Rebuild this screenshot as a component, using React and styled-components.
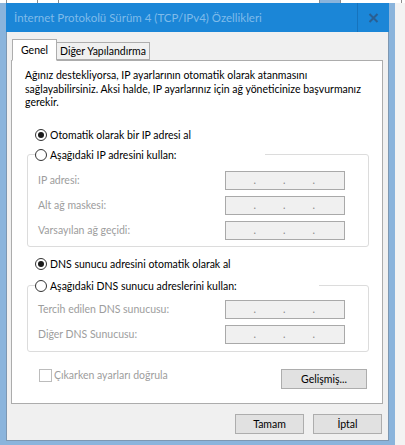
import styled, { createGlobalStyle } from 'styled-components';

const FONT = `Lato, "Noto Sans", "Liberation Sans", sans-serif`;

const GlobalStyle = createGlobalStyle`
  html, body {
    margin: 0;
    padding: 0;
    background: #f3f3f3;
  }
  body {
    font-family: ${FONT};
    font-size: 10.5px;
    color: #000;
  }
`;

const App = () => {
  return (
    <Page>
      <GlobalStyle />
      <BackWindow>
        <BackCell $w={6} />
        <BackCell $w={30} />
        <BackCell $w={20} />
        <BackCell $w={260} />
        <BackCell $w={20} $blue />
        <BackCell $w={60} />
      </BackWindow>
      <Desk>
        <Edge />
        <Window>
          <TitleBar>
            <Title>İnternet Protokolü Sürüm 4 (TCP/IPv4) Özellikleri</Title>
            <CloseButton>
              <svg width="11" height="10" viewBox="0 0 11 10">
                <path d="M1.5 1 L9.5 9 M9.5 1 L1.5 9" stroke="#2a5f92" strokeWidth="2" />
              </svg>
            </CloseButton>
          </TitleBar>
          <Body>
            <Tabs>
              <Tab $active>Genel</Tab>
              <Tab>Diğer Yapılandırma</Tab>
            </Tabs>
            <Panel>
              <Intro>
                Ağınız destekliyorsa, IP ayarlarının otomatik olarak atanmasını
                <br />
                sağlayabilirsiniz. Aksi halde, IP ayarlarınız için ağ yöneticinize başvurmanız
                <br />
                gerekir.
              </Intro>

              <RadioRow $top={17}>
                <Radio $checked />
                <span>Otomatik olarak bir IP adresi al</span>
              </RadioRow>
              <Group $top={4}>
                <Legend $width={230}>
                  <Radio />
                  <span>Aşağıdaki IP adresini kullan:</span>
                </Legend>
                <Fields $padTop={8} $padBottom={6}>
                  <Field label="IP adresi:" />
                  <Field label="Alt ağ maskesi:" />
                  <Field label="Varsayılan ağ geçidi:" />
                </Fields>
              </Group>

              <RadioRow $top={9}>
                <Radio $checked />
                <span>DNS sunucu adresini otomatik olarak al</span>
              </RadioRow>
              <Group $top={6}>
                <Legend $width={284}>
                  <Radio />
                  <span>Aşağıdaki DNS sunucu adreslerini kullan:</span>
                </Legend>
                <Fields $padTop={6} $padBottom={7}>
                  <Field label="Tercih edilen DNS sunucusu:" />
                  <Field label="Diğer DNS Sunucusu:" />
                </Fields>
              </Group>

              <BottomRow>
                <CheckLabel>
                  <CheckBox />
                  <span>Çıkarken ayarları doğrula</span>
                </CheckLabel>
                <Button $width={86}>Gelişmiş...</Button>
              </BottomRow>
            </Panel>
            <Footer>
              <Button $width={69}>Tamam</Button>
              <Button $width={69}>İptal</Button>
            </Footer>
          </Body>
        </Window>
        <Edge />
        <Beyond />
      </Desk>
    </Page>
  );
};

const Field = ({ label }) => (
  <FieldRow>
    <FieldLabel>{label}</FieldLabel>
    <IpBox>
      <IpPart />
      <IpPart>.</IpPart>
      <IpPart>.</IpPart>
      <IpPart>.</IpPart>
    </IpBox>
  </FieldRow>
);

const Page = styled.div`
  width: 405px;
  height: 445px;
  overflow: hidden;
  display: flex;
  flex-direction: column;
`;

const BackWindow = styled.div`
  height: 3px;
  display: flex;
  background: #fff;
`;

const BackCell = styled.div`
  width: ${(p) => p.$w}px;
  border-right: 1px solid #8d8d8d;
  background: ${(p) => (p.$blue ? '#8ab4dc' : '#fff')};
`;

const Desk = styled.div`
  display: flex;
  height: 442px;
  background: #8ab4dc;
`;

const Edge = styled.div`
  width: 6px;
  flex-shrink: 0;
`;

const Beyond = styled.div`
  flex: 1;
  background: #f3f3f3;
`;

const Window = styled.div`
  width: 383px;
  height: 438px;
  box-sizing: border-box;
  display: flex;
  flex-direction: column;
  border-left: 1px solid #7d97b1;
  border-right: 1px solid #7d97b1;
  border-bottom: 1px solid #7d97b1;
  background: #f0f0f0;
`;

const TitleBar = styled.div`
  height: 29px;
  display: flex;
  align-items: stretch;
  background: #1b86d7;
  margin: 0 -1px;
`;

const Title = styled.div`
  flex: 1;
  display: flex;
  align-items: center;
  padding-left: 8px;
  font-size: 11.5px;
  color: #7fbbea;
`;

const CloseButton = styled.div`
  width: 31px;
  display: flex;
  align-items: center;
  justify-content: center;
  border-left: 1px solid #1673bd;
`;

const Body = styled.div`
  flex: 1;
  display: flex;
  flex-direction: column;
  padding: 7px 5px 0 4px;
`;

const Tabs = styled.div`
  display: flex;
  align-items: flex-end;
  padding-left: 1px;
  margin-bottom: -1px;
  position: relative;
  z-index: 1;
`;

const Tab = styled.div`
  box-sizing: border-box;
  height: ${(p) => (p.$active ? 22 : 18)}px;
  padding: 0 ${(p) => (p.$active ? 8 : 3)}px;
  display: flex;
  align-items: center;
  background: ${(p) => (p.$active ? '#fff' : '#f0f0f0')};
  border: 1px solid #adadad;
  border-bottom: ${(p) => (p.$active ? '1px solid #fff' : '1px solid #adadad')};
  margin-right: -1px;
  margin-bottom: ${(p) => (p.$active ? 0 : 1)}px;
  color: #000;
`;

const Panel = styled.div`
  box-sizing: border-box;
  height: 344px;
  background: #fff;
  border: 1px solid #acacac;
  padding: 8px 0 0 13px;
  display: flex;
  flex-direction: column;
`;

const Intro = styled.p`
  margin: 0;
  line-height: 13.5px;
  white-space: nowrap;
`;

const RadioRow = styled.div`
  height: 16px;
  display: flex;
  align-items: center;
  gap: 3px;
  margin-top: ${(p) => p.$top}px;
  margin-left: 10px;
  white-space: nowrap;
`;

const Radio = styled.span`
  box-sizing: border-box;
  width: 12px;
  height: 12px;
  border-radius: 50%;
  border: 1px solid #333;
  background: #fff;
  display: inline-flex;
  align-items: center;
  justify-content: center;
  flex-shrink: 0;

  &::after {
    content: '';
    width: 6px;
    height: 6px;
    border-radius: 50%;
    background: ${(p) => (p.$checked ? '#1a1a1a' : 'transparent')};
  }
`;

const Group = styled.fieldset`
  margin: ${(p) => p.$top}px 0 0 2px;
  padding: 0;
  border: 1px solid #dcdcdc;
  border-radius: 3px;
  width: 342px;
  box-sizing: border-box;
  min-width: 0;
`;

const Legend = styled.legend`
  box-sizing: border-box;
  width: ${(p) => p.$width}px;
  height: 16px;
  margin-left: 7px;
  padding: 0;
  display: flex;
  align-items: center;
  gap: 3px;
  white-space: nowrap;
`;

const Fields = styled.div`
  display: flex;
  flex-direction: column;
  gap: 6px;
  padding: ${(p) => p.$padTop}px 23px ${(p) => p.$padBottom}px 10px;
`;

const FieldRow = styled.div`
  display: flex;
  align-items: center;
  justify-content: space-between;
  height: 19px;
`;

const FieldLabel = styled.span`
  color: #9d9d9d;
`;

const IpBox = styled.div`
  box-sizing: border-box;
  width: 120px;
  height: 19px;
  border: 1px solid #a9a9a9;
  background: #f0f0f0;
  display: grid;
  grid-template-columns: repeat(4, 1fr);
`;

const IpPart = styled.span`
  color: #8a8a8a;
  line-height: 17px;
  margin-left: -2px;
`;

const BottomRow = styled.div`
  display: flex;
  justify-content: space-between;
  align-items: flex-start;
  margin-top: 17px;
  padding: 0 15px 0 14px;
`;

const CheckLabel = styled.div`
  display: flex;
  align-items: center;
  gap: 2px;
  height: 13px;
  color: #9d9d9d;
`;

const CheckBox = styled.span`
  box-sizing: border-box;
  width: 13px;
  height: 13px;
  border: 1px solid #bcbcbc;
  background: #fff;
`;

const Button = styled.div`
  box-sizing: border-box;
  width: ${(p) => p.$width}px;
  height: 20px;
  display: flex;
  align-items: center;
  justify-content: center;
  background: #e1e1e1;
  border: 1px solid #adadad;
  color: #000;
`;

const Footer = styled.div`
  display: flex;
  justify-content: flex-end;
  gap: 9px;
  padding: 10px 1px 0 0;
`;

export default App;
